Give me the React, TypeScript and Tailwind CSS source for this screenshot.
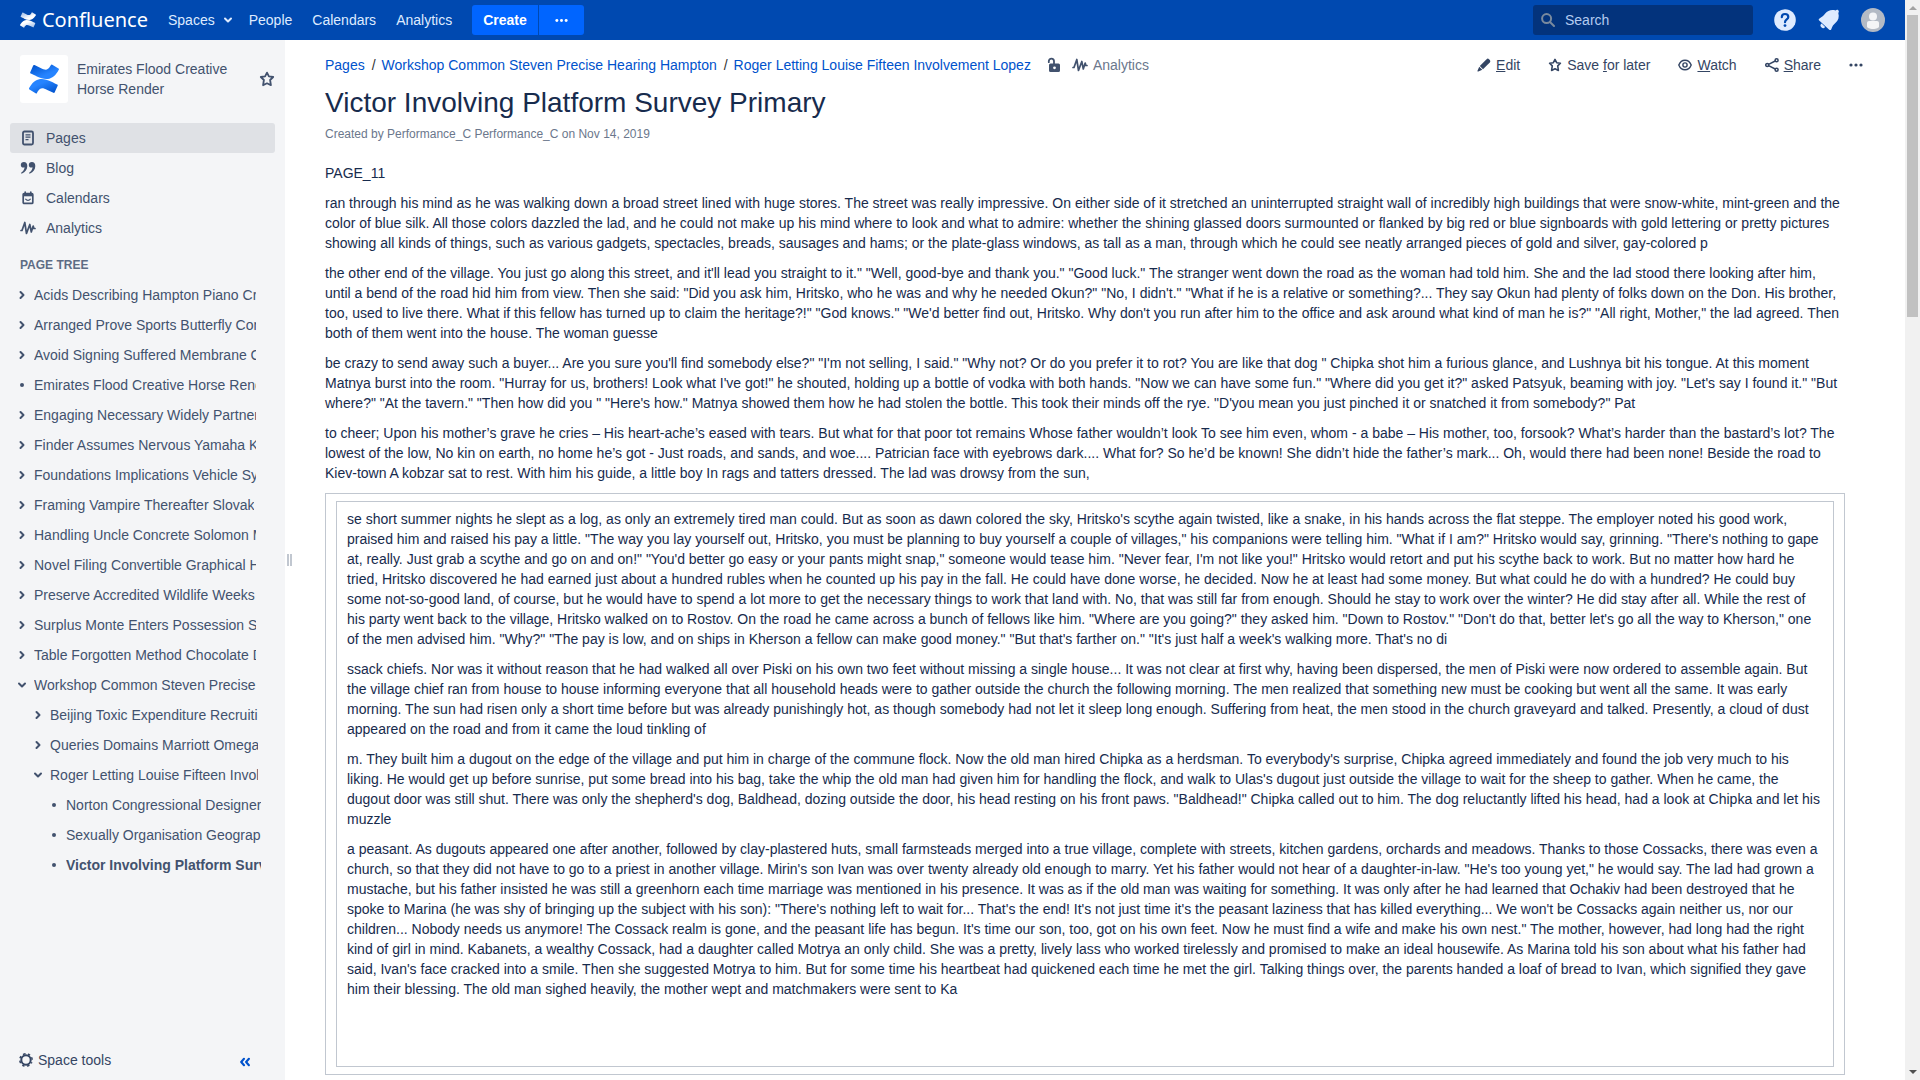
import type { ReactNode } from 'react';

type IconProps = { className?: string };

const ConfluenceShape = ({ className = '', a, b, c }: IconProps & { a: string; b: string; c: string }) => (
  <svg viewBox="0 0 256 246" className={className} aria-hidden="true">
    <defs>
      <linearGradient id={`${c}-lower`} x1="99%" y1="113%" x2="34%" y2="38%">
        <stop offset="18%" stopColor={a} />
        <stop offset="100%" stopColor={b} />
      </linearGradient>
      <linearGradient id={`${c}-upper`} x1="1%" y1="-13%" x2="66%" y2="62%">
        <stop offset="18%" stopColor={a} />
        <stop offset="100%" stopColor={b} />
      </linearGradient>
    </defs>
    <path
      fill={`url(#${c}-lower)`}
      d="M9.26 187.33c-2.64 4.31-5.61 9.32-8.13 13.3a8.13 8.13 0 0 0 2.72 11.04l52.88 32.54a8.13 8.13 0 0 0 11.27-2.77c2.11-3.54 4.84-8.14 7.81-13.07 20.99-34.65 42.11-30.41 80.18-12.23l52.43 24.94a8.13 8.13 0 0 0 10.93-4.07l25.18-56.95a8.13 8.13 0 0 0-4.07-10.66c-11.06-5.21-33.07-15.58-52.88-25.14-71.27-34.62-131.84-32.38-178.32 43.07z"
    />
    <path
      fill={`url(#${c}-upper)`}
      d="M246.12 58.23c2.64-4.31 5.61-9.32 8.13-13.3a8.13 8.13 0 0 0-2.72-11.04L198.65 1.36a8.13 8.13 0 0 0-11.6 2.7c-2.12 3.54-4.85 8.14-7.82 13.06-20.99 34.66-42.11 30.42-80.18 12.24L46.79 4.54a8.13 8.13 0 0 0-10.93 4.07L10.68 65.55a8.13 8.13 0 0 0 4.07 10.67c11.06 5.2 33.07 15.57 52.88 25.13 71.43 34.58 132 32.25 178.49-43.12z"
    />
  </svg>
);

const Chevron = ({ className = '' }: IconProps) => (
  <svg viewBox="0 0 10 10" className={className} fill="none" stroke="currentColor" strokeWidth="2" strokeLinecap="round" strokeLinejoin="round" aria-hidden="true">
    <path d="M3.5 2 6.5 5 3.5 8" />
  </svg>
);

const Star = ({ className = '' }: IconProps) => (
  <svg viewBox="0 0 16 16" className={className} fill="none" stroke="currentColor" strokeWidth="1.8" strokeLinejoin="round" aria-hidden="true">
    <path d="m8 1.6 1.9 3.800 4.300.6-3.100 3 .8 5.200L8 12.300l-3.900 1.900.8-5.200-3.100-3 4.300-.6z" />
  </svg>
);

const Dots = ({ className = '' }: IconProps) => (
  <svg viewBox="0 0 14 14" className={className} fill="currentColor" aria-hidden="true">
    <circle cx="2" cy="7" r="1.6" />
    <circle cx="7" cy="7" r="1.6" />
    <circle cx="12" cy="7" r="1.6" />
  </svg>
);

const Pulse = ({ className = '' }: IconProps) => (
  <svg viewBox="0 0 16 14" className={className} fill="none" stroke="currentColor" strokeWidth="1.7" strokeLinecap="round" strokeLinejoin="round" aria-hidden="true">
    <path d="M1 9.500h1L4.800 1.500l1.700 11L9.800 3.500l1.500 7.500L13.200 5l.6 2.500H15" />
  </svg>
);

const PageIcon = ({ className = '' }: IconProps) => (
  <svg viewBox="0 0 14 16" className={className} fill="none" stroke="currentColor" aria-hidden="true">
    <rect x="2" y="1.5" width="10" height="13" rx="1.4" strokeWidth="1.8" />
    <path d="M4.5 4.800h5M4.500 7.200h5M4.500 9.600h3" strokeWidth="1.2" />
  </svg>
);

const QuoteIcon = ({ className = '' }: IconProps) => (
  <svg viewBox="0 0 16 14" className={className} fill="currentColor" aria-hidden="true">
    <path d="M3.900 1C2 1 .8 2.200.8 3.900c0 1.600 1.100 2.700 2.600 2.700.5 0 .9-.1 1.200-.3-.2 2.200-1.400 3.900-3.200 5.200-.6.500-.1 1.400.6 1.100C5.300 11.300 7.300 8.400 7.300 5 7.300 2.600 6 1 3.900 1z" />
    <path d="M11.900 1c-1.900 0-3.100 1.200-3.100 2.900 0 1.600 1.100 2.700 2.600 2.700.5 0 .9-.1 1.200-.3-.2 2.200-1.400 3.900-3.200 5.200-.6.500-.1 1.400.6 1.100 3.300-1.300 5.300-4.200 5.300-7.600 0-2.400-1.300-4-3.400-4z" />
  </svg>
);

const CalendarIcon = ({ className = '' }: IconProps) => (
  <svg viewBox="0 0 14 14" className={className} fill="none" stroke="currentColor" aria-hidden="true">
    <rect x="2.2" y="2.6" width="9.6" height="9.8" rx="1" strokeWidth="1.7" />
    <path d="M2 4h10" strokeWidth="2.6" />
    <path d="M4.200 1v2M9.800 1v2" strokeWidth="1.6" strokeLinecap="round" />
    <path d="M4.700 8.200c1 1.500 3.600 1.500 4.600 0" strokeWidth="1.2" strokeLinecap="round" />
  </svg>
);

const LockIcon = ({ className = '' }: IconProps) => (
  <svg viewBox="0 0 14 16" className={className} aria-hidden="true">
    <path d="M1.800 5.200V4.200a2.600 2.600 0 0 1 5.200 0V7" fill="none" stroke="currentColor" strokeWidth="1.8" strokeLinecap="round" />
    <path fillRule="evenodd" fill="currentColor" d="M3.500 6.500h8A1.500 1.500 0 0 1 13 8v5.500a1.500 1.500 0 0 1-1.500 1.500h-8A1.500 1.500 0 0 1 2 13.500V8a1.500 1.500 0 0 1 1.500-1.500zm4 2.900a1.400 1.400 0 1 0 0 2.800 1.400 1.400 0 0 0 0-2.800z" />
  </svg>
);

const PencilIcon = ({ className = '' }: IconProps) => (
  <svg viewBox="0 0 14 14" className={className} fill="currentColor" aria-hidden="true">
    <path d="M9.600 1.200a1.700 1.700 0 0 1 2.400 0l.8.800a1.700 1.700 0 0 1 0 2.400L6 11.200 2.800 8z" />
    <path d="m2.200 8.700 3.100 3.100-4 1.700a.6.600 0 0 1-.8-.8z" />
  </svg>
);

const EyeIcon = ({ className = '' }: IconProps) => (
  <svg viewBox="0 0 14 14" className={className} fill="none" stroke="currentColor" strokeWidth="1.4" aria-hidden="true">
    <path d="M.8 7C2 4 4.300 2.200 7 2.200S12 4 13.200 7C12 10 9.700 11.800 7 11.800S2 10 .8 7z" />
    <circle cx="7" cy="7" r="2.1" />
  </svg>
);

const ShareIcon = ({ className = '' }: IconProps) => (
  <svg viewBox="0 0 14 14" className={className} fill="none" stroke="currentColor" strokeWidth="1.5" aria-hidden="true">
    <circle cx="2.2" cy="7" r="1.5" />
    <circle cx="11.6" cy="2.3" r="1.5" />
    <circle cx="11.6" cy="11.7" r="1.5" />
    <path d="m3.600 6.300 6.600-3.300M3.600 7.700l6.600 3.300" />
  </svg>
);

const GearIcon = ({ className = '' }: IconProps) => (
  <svg viewBox="0 0 14 14" className={className} fill="none" stroke="currentColor" aria-hidden="true">
    <circle cx="7" cy="7" r="4.7" strokeWidth="2" />
    <circle cx="7" cy="7" r="6.2" strokeWidth="1.5" strokeDasharray="2.5 2.37" strokeDashoffset="1.25" transform="rotate(22.5 7 7)" />
  </svg>
);

const SearchIcon = ({ className = '' }: IconProps) => (
  <svg viewBox="0 0 14 14" className={className} fill="none" stroke="currentColor" strokeWidth="2" strokeLinecap="round" aria-hidden="true">
    <circle cx="5.6" cy="5.6" r="4.5" />
    <path d="m9.200 9.200 3.800 3.800" />
  </svg>
);

const HelpIcon = ({ className = '' }: IconProps) => (
  <svg viewBox="0 0 22 22" className={className} aria-hidden="true">
    <circle cx="11" cy="11" r="10.8" fill="#deebff" />
    <path d="M7.800 8.200C7.800 6.200 9.200 5 11 5s3.300 1.200 3.300 3c0 2.300-3.300 2.600-3.300 5.200" fill="none" stroke="#0049b0" strokeWidth="2.2" strokeLinecap="round" />
    <circle cx="11" cy="16.6" r="1.4" fill="#0049b0" />
  </svg>
);

const BellIcon = ({ className = '' }: IconProps) => (
  <svg viewBox="0 0 22 22" className={className} fill="#deebff" aria-hidden="true">
    <path d="M1.200 11.500C.4 10.800.6 9.800 1.500 9.400 4 8.200 5.600 6.800 7.200 4.600 9.800 1.200 13.600.2 17.600 1.400c.8-.8 1.900-.9 2.700-.2.800.8.700 1.900 0 2.700 1.100 4 .2 7.200-2.700 9.800-2.200 1.900-3.300 3.600-4.300 6.500-.4 1-1.300 1.200-2.100.5z" />
    <path d="M3.600 14.600a2.500 2.500 0 1 0 3.500 3.500z" />
  </svg>
);

const AvatarIcon = ({ className = '' }: IconProps) => (
  <svg viewBox="0 0 24 24" className={className} aria-hidden="true">
    <circle cx="12" cy="12" r="12" fill="#b3bac5" />
    <circle cx="12" cy="8.5" r="4" fill="#f4f5f7" />
    <path d="M6 15c0-1.100.9-2 2-2h8c1.100 0 2 .9 2 2v3.500c0 1.300-2.600 2.500-6 2.500s-6-1.200-6-2.500z" fill="#f4f5f7" />
  </svg>
);

const CollapseIcon = ({ className = '' }: IconProps) => (
  <svg viewBox="0 0 10 10" className={className} fill="none" stroke="currentColor" strokeWidth="2.1" strokeLinecap="round" strokeLinejoin="round" aria-hidden="true">
    <path d="M4 1.800 1.200 5 4 8.200M8.900 1.800 6.100 5l2.800 3.200" />
  </svg>
);

type TreeRow = { text: string; kind: 'closed' | 'open' | 'leaf'; level: 1 | 2 | 3; current?: boolean };

const tree: TreeRow[] = [
  { text: 'Acids Describing Hampton Piano Cr', kind: 'closed', level: 1 },
  { text: 'Arranged Prove Sports Butterfly Con', kind: 'closed', level: 1 },
  { text: 'Avoid Signing Suffered Membrane C', kind: 'closed', level: 1 },
  { text: 'Emirates Flood Creative Horse Render', kind: 'leaf', level: 1 },
  { text: 'Engaging Necessary Widely Partner', kind: 'closed', level: 1 },
  { text: 'Finder Assumes Nervous Yamaha K', kind: 'closed', level: 1 },
  { text: 'Foundations Implications Vehicle Sy', kind: 'closed', level: 1 },
  { text: 'Framing Vampire Thereafter Slovak', kind: 'closed', level: 1 },
  { text: 'Handling Uncle Concrete Solomon M', kind: 'closed', level: 1 },
  { text: 'Novel Filing Convertible Graphical H', kind: 'closed', level: 1 },
  { text: 'Preserve Accredited Wildlife Weeks', kind: 'closed', level: 1 },
  { text: 'Surplus Monte Enters Possession S', kind: 'closed', level: 1 },
  { text: 'Table Forgotten Method Chocolate D', kind: 'closed', level: 1 },
  { text: 'Workshop Common Steven Precise Hearing Hampton', kind: 'open', level: 1 },
  { text: 'Beijing Toxic Expenditure Recruiti', kind: 'closed', level: 2 },
  { text: 'Queries Domains Marriott Omega', kind: 'closed', level: 2 },
  { text: 'Roger Letting Louise Fifteen Involvement Lopez', kind: 'open', level: 2 },
  { text: 'Norton Congressional Designer', kind: 'leaf', level: 3 },
  { text: 'Sexually Organisation Geograp', kind: 'leaf', level: 3 },
  { text: 'Victor Involving Platform Survey Primary', kind: 'leaf', level: 3, current: true },
];

const levelClass = {
  1: 'pl-[17px] pr-[29px]',
  2: 'pl-[33px] pr-[27px]',
  3: 'pl-[49px] pr-6',
};

const intro = [
  'PAGE_11',
  `ran through his mind as he was walking down a broad street lined with huge stores. The street was really impressive. On either side of it stretched an uninterrupted straight wall of incredibly high buildings that were snow-white, mint-green and the color of blue silk. All those colors dazzled the lad, and he could not make up his mind where to look and what to admire: whether the shining glassed doors surmounted or flanked by big red or blue signboards with gold lettering or pretty pictures showing all kinds of things, such as various gadgets, spectacles, breads, sausages and hams; or the plate-glass windows, as tall as a man, through which he could see neatly arranged pieces of gold and silver, gay-colored p`,
  `the other end of the village. You just go along this street, and it'll lead you straight to it." "Well, good-bye and thank you." "Good luck." The stranger went down the road as the woman had told him. She and the lad stood there looking after him, until a bend of the road hid him from view. Then she said: "Did you ask him, Hritsko, who he was and why he needed Okun?" "No, I didn't." "What if he is a relative or something?... They say Okun had plenty of folks down on the Don. His brother, too, used to live there. What if this fellow has turned up to claim the heritage?!" "God knows." "We'd better find out, Hritsko. Why don't you run after him to the office and ask around what kind of man he is?" "All right, Mother," the lad agreed. Then both of them went into the house. The woman guesse`,
  `be crazy to send away such a buyer... Are you sure you'll find somebody else?" "I'm not selling, I said." "Why not? Or do you prefer it to rot? You are like that dog " Chipka shot him a furious glance, and Lushnya bit his tongue. At this moment Matnya burst into the room. "Hurray for us, brothers! Look what I've got!" he shouted, holding up a bottle of vodka with both hands. "Now we can have some fun." "Where did you get it?" asked Patsyuk, beaming with joy. "Let's say I found it." "But where?" "At the tavern." "Then how did you " "Here's how." Matnya showed them how he had stolen the bottle. This took their minds off the rye. "D'you mean you just pinched it or snatched it from somebody?" Pat`,
  `to cheer; Upon his mother’s grave he cries – His heart-ache’s eased with tears. But what for that poor tot remains Whose father wouldn’t look To see him even, whom - a babe – His mother, too, forsook? What’s harder than the bastard’s lot? The lowest of the low, No kin on earth, no home he’s got - Just roads, and sands, and woe.... Patrician face with eyebrows dark.... What for? So he’d be known! She didn’t hide the father’s mark... Oh, would there had been none! Beside the road to Kiev-town A kobzar sat to rest. With him his guide, a little boy In rags and tatters dressed. The lad was drowsy from the sun,`,
];

const boxed = [
  `se short summer nights he slept as a log, as only an extremely tired man could. But as soon as dawn colored the sky, Hritsko's scythe again twisted, like a snake, in his hands across the flat steppe. The employer noted his good work, praised him and raised his pay a little. "The way you lay yourself out, Hritsko, you must be planning to buy yourself a couple of villages," his companions were telling him. "What if I am?" Hritsko would say, grinning. "There's nothing to gape at, really. Just grab a scythe and go on and on!" "You'd better go easy or your pants might snap," someone would tease him. "Never fear, I'm not like you!" Hritsko would retort and put his scythe back to work. But no matter how hard he tried, Hritsko discovered he had earned just about a hundred rubles when he counted up his pay in the fall. He could have done worse, he decided. Now he at least had some money. But what could he do with a hundred? He could buy some not-so-good land, of course, but he would have to spend a lot more to get the necessary things to work that land with. No, that was still far from enough. Should he stay to work over the winter? He did stay after all. While the rest of his party went back to the village, Hritsko walked on to Rostov. On the road he came across a bunch of fellows like him. "Where are you going?" they asked him. "Down to Rostov." "Don't do that, better let's go all the way to Kherson," one of the men advised him. "Why?" "The pay is low, and on ships in Kherson a fellow can make good money." "But that's farther on." "It's just half a week's walking more. That's no di`,
  `ssack chiefs. Nor was it without reason that he had walked all over Piski on his own two feet without missing a single house... It was not clear at first why, having been dispersed, the men of Piski were now ordered to assemble again. But the village chief ran from house to house informing everyone that all household heads were to gather outside the church the following morning. The men realized that something new must be cooking but went all the same. It was early morning. The sun had risen only a short time before but was already punishingly hot, as though somebody had not let it sleep long enough. Suffering from heat, the men stood in the church graveyard and talked. Presently, a cloud of dust appeared on the road and from it came the loud tinkling of`,
  `m. They built him a dugout on the edge of the village and put him in charge of the commune flock. Now the old man hired Chipka as a herdsman. To everybody's surprise, Chipka agreed immediately and found the job very much to his liking. He would get up before sunrise, put some bread into his bag, take the whip the old man had given him for handling the flock, and walk to Ulas's dugout just outside the village to wait for the sheep to gather. When he came, the dugout door was still shut. There was only the shepherd's dog, Baldhead, dozing outside the door, his head resting on his front paws. "Baldhead!" Chipka called out to him. The dog reluctantly lifted his head, had a look at Chipka and let his muzzle`,
  `a peasant. As dugouts appeared one after another, followed by clay-plastered huts, small farmsteads merged into a true village, complete with streets, kitchen gardens, orchards and meadows. Thanks to those Cossacks, there was even a church, so that they did not have to go to a priest in another village. Mirin's son Ivan was over twenty already old enough to marry. Yet his father would not hear of a daughter-in-law. "He's too young yet," he would say. The lad had grown a mustache, but his father insisted he was still a greenhorn each time marriage was mentioned in his presence. It was as if the old man was waiting for something. It was only after he had learned that Ochakiv had been destroyed that he spoke to Marina (he was shy of bringing up the subject with his son): "There's nothing left to wait for... That's the end! It's not just time it's the peasant laziness that has killed everything... We won't be Cossacks again neither us, nor our children... Nobody needs us anymore! The Cossack realm is gone, and the peasant life has begun. It's time our son, too, got on his own feet. Now he must find a wife and make his own nest." The mother, however, had long had the right kind of girl in mind. Kabanets, a wealthy Cossack, had a daughter called Motrya an only child. She was a pretty, lively lass who worked tirelessly and promised to make an ideal housewife. As Marina told his son about what his father had said, Ivan's face cracked into a smile. Then she suggested Motrya to him. But for some time his heartbeat had quickened each time he met the girl. Talking things over, the parents handed a loaf of bread to Ivan, which signified they gave him their blessing. The old man sighed heavily, the mother wept and matchmakers were sent to Ka`,
];

function Header() {
  return (
    <header className="flex h-10 shrink-0 items-center bg-[#0049b0] px-5 text-[#deebff]">
      <a href="#home" className="mr-5 flex w-32 items-center gap-[6px] text-white">
        <ConfluenceShape className="h-4 w-4" a="#9fbde8" b="#ffffff" c="brand" />
        <span className="font-['Noto_Sans',sans-serif] text-xl leading-10">Confluence</span>
      </a>
      <nav className="flex items-center gap-5">
        <button type="button" className="-mr-1 flex items-center gap-2">
          Spaces
          <Chevron className="h-[10px] w-[10px] rotate-90" />
        </button>
        <a href="#people">People</a>
        <a href="#calendars">Calendars</a>
        <a href="#analytics">Analytics</a>
      </nav>
      <div className="ml-5 flex h-[30px] gap-px">
        <button type="button" className="rounded-l-[3px] bg-[#0065ff] px-[11px] font-bold text-white">
          Create
        </button>
        <button type="button" aria-label="Create from template" className="rounded-r-[3px] bg-[#0065ff] px-4 text-white">
          <Dots className="h-[13px] w-[13px]" />
        </button>
      </div>
      <div className="ml-auto flex items-center">
        <div className="flex h-[30px] w-[220px] items-center gap-[10px] rounded-[3px] bg-[#03337c] px-2">
          <SearchIcon className="h-[14px] w-[14px] shrink-0 text-[#7a8a9e]" />
          <input type="text" aria-label="Search" placeholder="Search" className="w-full min-w-0 bg-transparent outline-none placeholder:text-[#b3cbf0]" />
        </div>
        <button type="button" aria-label="Help" className="ml-[21px]">
          <HelpIcon className="h-[22px] w-[22px]" />
        </button>
        <button type="button" aria-label="Notifications" className="ml-[22px]">
          <BellIcon className="h-[22px] w-[22px]" />
        </button>
        <button type="button" aria-label="Profile" className="ml-[21px]">
          <AvatarIcon className="h-6 w-6" />
        </button>
      </div>
    </header>
  );
}

function SideLink({ icon, label, active }: { icon: ReactNode; label: string; active?: boolean }) {
  return (
    <a
      href="#section"
      className={`flex h-[30px] items-center gap-[10px] rounded-[3px] pl-[10px] ${active ? 'bg-[#dfe1e5]' : ''}`}
    >
      <span className="flex w-4 justify-center">{icon}</span>
      {label}
    </a>
  );
}

function Sidebar() {
  return (
    <aside className="flex w-[285px] shrink-0 flex-col bg-[#f4f5f7] text-[#42526e]">
      <div className="flex items-center pt-[15px] pr-[10px] pl-5">
        <a href="#space" className="flex h-12 w-12 shrink-0 items-center justify-center rounded-[3px] bg-white">
          <ConfluenceShape className="h-[30px] w-[30px]" a="#0052cc" b="#2684ff" c="space" />
        </a>
        <a href="#space" className="ml-[9px] w-44 leading-5">Emirates Flood Creative Horse Render</a>
        <button type="button" aria-label="Add space to favourites" className="ml-auto">
          <Star className="h-4 w-4" />
        </button>
      </div>
      <nav className="mx-[10px] mt-5">
        <SideLink active label="Pages" icon={<PageIcon className="h-4 w-[14px]" />} />
        <SideLink label="Blog" icon={<QuoteIcon className="h-[14px] w-4" />} />
        <SideLink label="Calendars" icon={<CalendarIcon className="h-[14px] w-[14px]" />} />
        <SideLink label="Analytics" icon={<Pulse className="h-[14px] w-4" />} />
      </nav>
      <h2 className="mt-3 pl-5 text-xs leading-5 font-bold text-[#5e6c84] uppercase">Page tree</h2>
      <ul className="mt-[5px]">
        {tree.map((row) => (
          <li key={row.text} className={`flex h-[30px] items-center gap-[7px] ${levelClass[row.level]}`}>
            {row.kind === 'leaf' ? (
              <span className="flex h-[10px] w-[10px] shrink-0 items-center justify-center">
                <span className="h-1 w-1 rounded-full bg-[#42526e]" />
              </span>
            ) : (
              <button type="button" aria-label="Toggle children" className="shrink-0">
                <Chevron className={row.kind === 'open' ? 'h-[10px] w-[10px] rotate-90' : 'h-[10px] w-[10px]'} />
              </button>
            )}
            <a href="#page" className={`overflow-hidden leading-5 whitespace-nowrap ${row.current ? 'font-bold' : ''}`}>
              {row.text}
            </a>
          </li>
        ))}
      </ul>
      <div className="mt-auto flex h-10 items-center pr-[35px] pl-[19px] text-[#344563]">
        <button type="button" className="flex items-center gap-[5px]">
          <GearIcon className="h-[14px] w-[14px]" />
          Space tools
        </button>
        <button type="button" aria-label="Collapse sidebar" className="mt-1 ml-auto text-[#0052cc]">
          <CollapseIcon className="h-[10px] w-[10px]" />
        </button>
      </div>
    </aside>
  );
}

function Action({ icon, children }: { icon: ReactNode; children: ReactNode }) {
  return (
    <button type="button" className="flex items-center gap-[5px] whitespace-nowrap">
      {icon}
      <span>{children}</span>
    </button>
  );
}

function PageHeader() {
  return (
    <div className="flex items-center justify-between leading-5">
      <nav aria-label="Breadcrumb" className="flex items-center text-[#0052cc]">
        <a href="#pages">Pages</a>
        <span className="pr-[6px] pl-[7px] text-[#333333]">/</span>
        <a href="#workshop">Workshop Common Steven Precise Hearing Hampton</a>
        <span className="pr-[6px] pl-[7px] text-[#333333]">/</span>
        <a href="#roger">Roger Letting Louise Fifteen Involvement Lopez</a>
        <button type="button" aria-label="Unrestricted" className="ml-4 text-[#42526e]">
          <LockIcon className="h-4 w-[14px]" />
        </button>
        <a href="#analytics" className="ml-[11px] flex items-center gap-[5px] text-[#6b778c]">
          <Pulse className="h-[14px] w-4 text-[#42526e]" />
          Analytics
        </a>
      </nav>
      <div className="-mr-[18px] flex items-center gap-7 text-[#344563]">
        <Action icon={<PencilIcon className="h-[14px] w-[14px]" />}>
          <u>E</u>dit
        </Action>
        <Action icon={<Star className="h-[14px] w-[14px]" />}>
          Save <u>f</u>or later
        </Action>
        <Action icon={<EyeIcon className="h-[14px] w-[14px]" />}>
          <u>W</u>atch
        </Action>
        <Action icon={<ShareIcon className="h-[14px] w-[14px]" />}>
          <u>S</u>hare
        </Action>
        <button type="button" aria-label="More actions">
          <Dots className="h-[14px] w-[14px]" />
        </button>
      </div>
    </div>
  );
}

export default function App() {
  return (
    <div className="flex h-screen overflow-hidden bg-white font-['Liberation_Sans',Arial,sans-serif] text-sm leading-5 text-[#172b4d]">
      <div className="flex min-w-0 flex-1 flex-col">
        <Header />
        <div className="flex min-h-0 flex-1">
          <Sidebar />
          <div className="flex w-10 shrink-0 items-center pl-0.5" role="separator" aria-orientation="vertical">
            <span className="h-3 w-[5px] border-x-2 border-[#c1c7d0]" />
          </div>
          <main className="min-w-0 flex-1 pt-[15px] pr-[60px]">
            <PageHeader />
            <h1 className="mt-3 text-[28px] leading-8">Victor Involving Platform Survey Primary</h1>
            <p className="mt-[5px] text-xs leading-5 text-[#6b778c]">
              Created by Performance_C Performance_C on Nov 14, 2019
            </p>
            <div className="mt-[19px] space-y-[10px]">
              {intro.map((text) => (
                <p key={text}>{text}</p>
              ))}
              <div className="border border-[#c1c7d0] px-[10px] py-[7px]">
                <div className="space-y-[10px] border border-[#c1c7d0] px-[10px] pt-[7px] pb-[67px]">
                  {boxed.map((text) => (
                    <p key={text}>{text}</p>
                  ))}
                </div>
              </div>
            </div>
          </main>
        </div>
      </div>
      <div className="flex w-[15px] shrink-0 flex-col items-center justify-between bg-[#f1f1f1]" aria-hidden="true">
        <div className="flex w-full flex-col items-center">
          <span className="mt-[6px] mb-[5px] border-x-4 border-b-4 border-x-transparent border-b-[#a3a3a3]" />
          <span className="h-[302px] w-[11px] bg-[#c1c1c1]" />
        </div>
        <span className="mb-[6px] border-x-4 border-t-4 border-x-transparent border-t-[#505050]" />
      </div>
    </div>
  );
}
